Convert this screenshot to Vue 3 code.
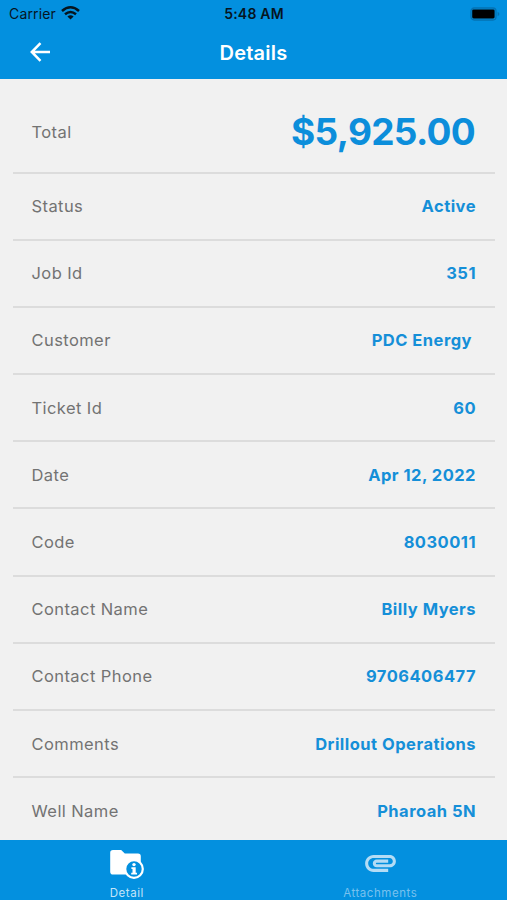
<script setup>
const rows = [
  { label: 'Status', value: 'Active' },
  { label: 'Job Id', value: '351' },
  { label: 'Customer', value: 'PDC Energy', trailing: true },
  { label: 'Ticket Id', value: '60' },
  { label: 'Date', value: 'Apr 12, 2022' },
  { label: 'Code', value: '8030011' },
  { label: 'Contact Name', value: 'Billy Myers' },
  { label: 'Contact Phone', value: '9706406477' },
  { label: 'Comments', value: 'Drillout Operations' },
  { label: 'Well Name', value: 'Pharoah 5N' },
]
</script>

<template>
  <div class="screen">
    <header class="header">
      <div class="status">
        <div class="carrier">
          <span>Carrier</span>
          <svg class="wifi" width="19" height="14" viewBox="0 0 19 14">
            <g fill="none" stroke="#06151f" stroke-width="2.5">
              <path d="M1 5 Q9.5 -2.4 18 5" />
              <path d="M4 8.3 Q9.5 3.6 15 8.3" />
            </g>
            <path d="M6.4 10.5 Q9.5 7.9 12.6 10.5 L9.5 13.5 Z" fill="#06151f" />
          </svg>
        </div>
        <span class="time">5:48 AM</span>
        <svg class="battery" width="31" height="14" viewBox="0 0 31 14">
          <rect x="1" y="1" width="25" height="12" rx="3.2" fill="none" stroke="#0472b3" stroke-width="1.3" />
          <rect x="2.2" y="2.4" width="22.4" height="9" rx="1.4" fill="#000" />
          <path d="M27.6 4.8 Q29.4 5.6 29.4 7 Q29.4 8.4 27.6 9.2 Z" fill="#0472b3" />
        </svg>
      </div>
      <div class="nav">
        <svg class="back" width="20" height="20" viewBox="0 0 20 20">
          <path d="M10.5 1.2 L1.8 10 L10.5 18.8 M2 10 H20" fill="none" stroke="#fff" stroke-width="2.5" />
        </svg>
        <h1>Details</h1>
      </div>
    </header>

    <main class="list">
      <div class="row total">
        <span class="label">Total</span>
        <span class="amount">$5,925.00</span>
      </div>
      <div v-for="row in rows" :key="row.label" class="row">
        <span class="label">{{ row.label }}</span>
        <span class="value" :class="{ trailing: row.trailing }">{{ row.value }}</span>
      </div>
    </main>

    <nav class="tabs">
      <div class="tab active">
        <svg width="36" height="32" viewBox="0 0 36 32">
          <path d="M4 1 H12.2 L15.8 4.6 H29 Q31.8 4.6 31.8 7.4 V25.5 H4 Q1.2 25.5 1.2 22.7 V3.8 Q1.2 1 4 1 Z" fill="#fff" />
          <circle cx="25" cy="20" r="8.8" fill="#0390df" stroke="#fff" stroke-width="2.2" />
          <circle cx="25" cy="15.6" r="1.7" fill="#fff" />
          <path d="M22.4 18.2 H26.7 V23.8 H28 V25.5 H22.2 V23.8 H23.5 V19.9 H22.4 Z" fill="#fff" />
        </svg>
        <span>Detail</span>
      </div>
      <div class="tab">
        <svg width="37" height="32" viewBox="0 3.1 24 20.8">
          <path d="M2 12.5C2 9.46 4.46 7 7.5 7H18c2.21 0 4 1.79 4 4s-1.79 4-4 4H9.5C8.12 15 7 13.88 7 12.5S8.12 10 9.5 10H17v2H9.41c-.55 0-.55 1 0 1H18c1.1 0 2-.9 2-2s-.9-2-2-2H7.5C5.57 9 4 10.57 4 12.5S5.57 16 7.5 16H17v2H7.5C4.46 18 2 15.54 2 12.5z" fill="#b4dcf5" />
        </svg>
        <span>Attachments</span>
      </div>
    </nav>
  </div>
</template>

<style>
body {
  margin: 0;
  overflow: hidden;
}
</style>

<style scoped>
.screen {
  width: 507px;
  height: 900px;
  display: flex;
  flex-direction: column;
  background: #f1f1f1;
  font-family: Inter, "Liberation Sans", sans-serif;
  overflow: hidden;
}
.header {
  flex: none;
  height: 79px;
  background: #0390df;
}
.status {
  height: 27px;
  display: grid;
  grid-template-columns: 1fr auto 1fr;
  align-items: center;
  padding: 0 6px 0 9px;
  box-sizing: border-box;
  color: #06151f;
  font-size: 14px;
}
.carrier {
  display: flex;
  align-items: center;
  gap: 5px;
  letter-spacing: 0.15px;
}
.wifi {
  margin-top: -2px;
}
.time {
  font-weight: 600;
  letter-spacing: 0.2px;
  margin-left: -2px;
}
.battery {
  justify-self: end;
}
.nav {
  height: 51px;
  display: grid;
  grid-template-columns: 1fr auto 1fr;
  align-items: center;
  padding: 0 30px;
}
.back {
  margin-bottom: 1px;
}
h1 {
  margin: 0;
  color: #fff;
  font-size: 20px;
  font-weight: 600;
  letter-spacing: 0.25px;
}
.list {
  flex: 1;
  min-height: 0;
  padding: 0 12px 0 13px;
  overflow: hidden;
}
.row {
  height: 67.2px;
  box-sizing: border-box;
  display: flex;
  align-items: center;
  justify-content: space-between;
  padding: 0 19px 0 18.5px;
  border-bottom: 2px solid #dcdcdc;
}
.total {
  height: 94.5px;
  padding-top: 13px;
}
.label {
  color: #737373;
  font-size: 16.5px;
  letter-spacing: 0.42px;
}
.value {
  color: #158fd8;
  font-size: 16.5px;
  font-weight: 650;
  letter-spacing: 0.48px;
}
.trailing {
  padding-right: 4px;
}
.amount {
  color: #0c8edb;
  font-size: 37px;
  font-weight: 650;
  letter-spacing: -0.7px;
  padding-right: 1px;
}
.tabs {
  flex: none;
  height: 60px;
  display: grid;
  grid-template-columns: 1fr 1fr;
  background: #0390df;
}
.tab {
  display: flex;
  flex-direction: column;
  align-items: center;
  padding-top: 9px;
  color: #78c1ee;
  font-size: 11.5px;
  line-height: 14px;
  letter-spacing: 0.55px;
}
.tab span {
  margin-top: 5px;
}
.tab.active {
  color: #c3e4f8;
}
</style>
